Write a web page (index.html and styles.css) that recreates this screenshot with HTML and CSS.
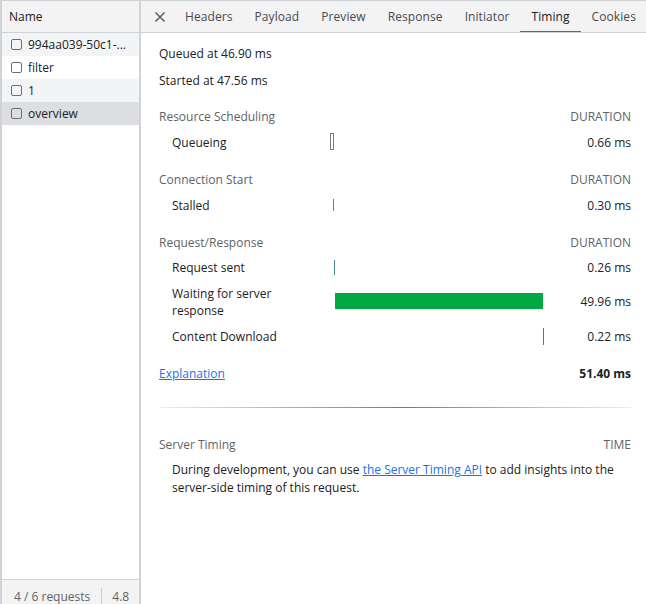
FILE: index.html
```html
<!DOCTYPE html>
<html>
<head>
<meta charset="utf-8">
<link rel="stylesheet" href="styles.css">
</head>
<body>
<div class="app">
  <aside class="list">
    <div class="list-head">Name</div>
    <div class="list-body">
      <div class="req stripe"><span class="cb"></span><span class="rname">994aa039-50c1-...</span></div>
      <div class="req"><span class="cb"></span><span class="rname">filter</span></div>
      <div class="req stripe"><span class="cb"></span><span class="rname">1</span></div>
      <div class="req selected"><span class="cb"></span><span class="rname">overview</span></div>
    </div>
    <div class="list-foot"><span class="count">4 / 6 requests</span><span class="size">4.8</span></div>
  </aside>
  <main class="detail">
    <nav class="tabs">
      <span class="close"><svg width="12" height="12" viewBox="0 0 12 12"><path d="M1.5 1.5 L10.5 10.5 M10.5 1.5 L1.5 10.5" stroke="#5f6368" stroke-width="1.6" fill="none"/></svg></span>
      <span class="tab">Headers</span>
      <span class="tab">Payload</span>
      <span class="tab">Preview</span>
      <span class="tab">Response</span>
      <span class="tab">Initiator</span>
      <span class="tab active">Timing</span>
      <span class="tab">Cookies</span>
    </nav>
    <section class="timing">
      <div class="meta">Queued at 46.90 ms</div>
      <div class="meta">Started at 47.56 ms</div>

      <div class="shead"><span>Resource Scheduling</span><span class="cap">DURATION</span></div>
      <div class="row"><span class="lbl">Queueing</span><span class="bararea"><span class="mark queue"></span></span><span class="val">0.66 ms</span></div>

      <div class="shead gap"><span>Connection Start</span><span class="cap">DURATION</span></div>
      <div class="row"><span class="lbl">Stalled</span><span class="bararea"><span class="mark stall"></span></span><span class="val">0.30 ms</span></div>

      <div class="shead gap"><span>Request/Response</span><span class="cap">DURATION</span></div>
      <div class="row short"><span class="lbl">Request sent</span><span class="bararea"><span class="mark sent"></span></span><span class="val">0.26 ms</span></div>
      <div class="row tall"><span class="lbl">Waiting for server response</span><span class="bararea"><span class="mark wait"></span></span><span class="val">49.96 ms</span></div>
      <div class="row"><span class="lbl">Content Download</span><span class="bararea"><span class="mark dl"></span></span><span class="val">0.22 ms</span></div>

      <div class="total"><a class="link" href="#">Explanation</a><b>51.40 ms</b></div>
      <div class="sep"></div>

      <div class="shead server"><span>Server Timing</span><span class="cap">TIME</span></div>
      <div class="note">During development, you can use <a class="link" href="#">the Server Timing API</a> to add insights into the server-side timing of this request.</div>
    </section>
  </main>
</div>
</body>
</html>
```

FILE: styles.css
```css
* { box-sizing: border-box; }
html, body { margin: 0; padding: 0; }
body {
  font-family: "Open Sans", "Noto Sans", sans-serif;
  font-size: 12px;
  color: #202124;
  background: #fff;
}
.app {
  display: flex;
  width: 646px;
  height: 604px;
  border-top: 1px solid #d0d2d6;
  border-left: 2px solid #d0d2d6;
}
.list {
  width: 139px;
  flex: none;
  display: flex;
  flex-direction: column;
  border-right: 2px solid #d0d2d6;
}
.list-head {
  height: 32px;
  display: flex;
  align-items: center;
  padding-left: 7px;
  background: #f3f3f3;
  border-bottom: 1px solid #d0d2d6;
  color: #202124;
}
.list-body { flex: 1; }
.req {
  height: 23px;
  display: flex;
  align-items: center;
  padding-left: 9px;
  white-space: nowrap;
  overflow: hidden;
}
.req.stripe { background: #f3f4f5; }
.req.selected { background: #dcdee2; }
.cb {
  width: 11px;
  height: 11px;
  border: 1px solid #6e6e6e;
  border-radius: 2px;
  margin-right: 6px;
  flex: none;
}
.rname { color: #202124; }
.list-foot {
  height: 25px;
  display: flex;
  align-items: flex-start;
  padding-top: 8px;
  background: #f3f3f3;
  border-top: 1px solid #d0d2d6;
  color: #5f6368;
  white-space: nowrap;
  overflow: hidden;
}
.count { padding: 0 11px 0 12px; border-right: 1px solid #c8cacd; line-height: 17px; }
.size { padding-left: 10px; line-height: 17px; }

.detail { flex: 1; display: flex; flex-direction: column; min-width: 0; }
.tabs {
  height: 32px;
  display: flex;
  align-items: stretch;
  background: #f3f3f3;
  border-bottom: 1px solid #d0d2d6;
  white-space: nowrap;
  overflow: hidden;
}
.close {
  width: 33px;
  flex: none;
  display: flex;
  align-items: center;
  justify-content: center;
  padding-left: 5px;
}
.tab {
  display: flex;
  align-items: center;
  padding: 0 11px;
  color: #474b50;
  letter-spacing: 0.08px;
  border-bottom: 2px solid transparent;
  margin-bottom: -1px;
}
.tab.active { border-bottom-color: #1a73e8; color: #202124; }

.timing { padding: 7px 15px 0 18px; }
.meta { height: 27px; display: flex; align-items: center; }
.meta + .meta { margin-bottom: 9px; }
.shead {
  height: 26px;
  display: flex;
  align-items: center;
  justify-content: space-between;
  color: #5f6368;
}
.shead.gap { margin-top: 11px; }
.row {
  height: 26px;
  display: flex;
  align-items: center;
  padding-left: 13px;
}
.row.short { height: 25px; }
.row.tall { height: 43px; }
.lbl { width: 158px; flex: none; line-height: 17px; padding-right: 30px; }
.bararea { width: 214px; flex: none; position: relative; height: 100%; }
.val { flex: 1; text-align: right; }
.mark { position: absolute; }
.mark.queue { left: 0; top: 4px; width: 4px; height: 17px; border: 1px solid #7a7a7a; }
.mark.stall { left: 3px; top: 7px; width: 1px; height: 12px; background: #7a7a7a; }
.mark.sent { left: 4px; top: 5px; width: 1px; height: 15px; background: #4e8c92; }
.mark.wait { left: 5px; top: 13px; width: 208px; height: 16px; background: #00a846; }
.mark.dl { left: 213px; top: 5px; width: 1px; height: 17px; background: #1d86cf; }

.total {
  margin-top: 11px;
  height: 26px;
  display: flex;
  align-items: center;
  justify-content: space-between;
}
.total b { font-weight: 700; }
.link { color: #1a73e8; text-decoration: underline; }
.sep {
  margin-top: 21px;
  height: 1px;
  background: linear-gradient(to right, #eeeeee, #7a7a7a 52%, #eeeeee);
}
.shead.server { margin-top: 23px; }
.note {
  margin: 4px 0 0 13px;
  line-height: 18px;
  color: #202124;
}
```
